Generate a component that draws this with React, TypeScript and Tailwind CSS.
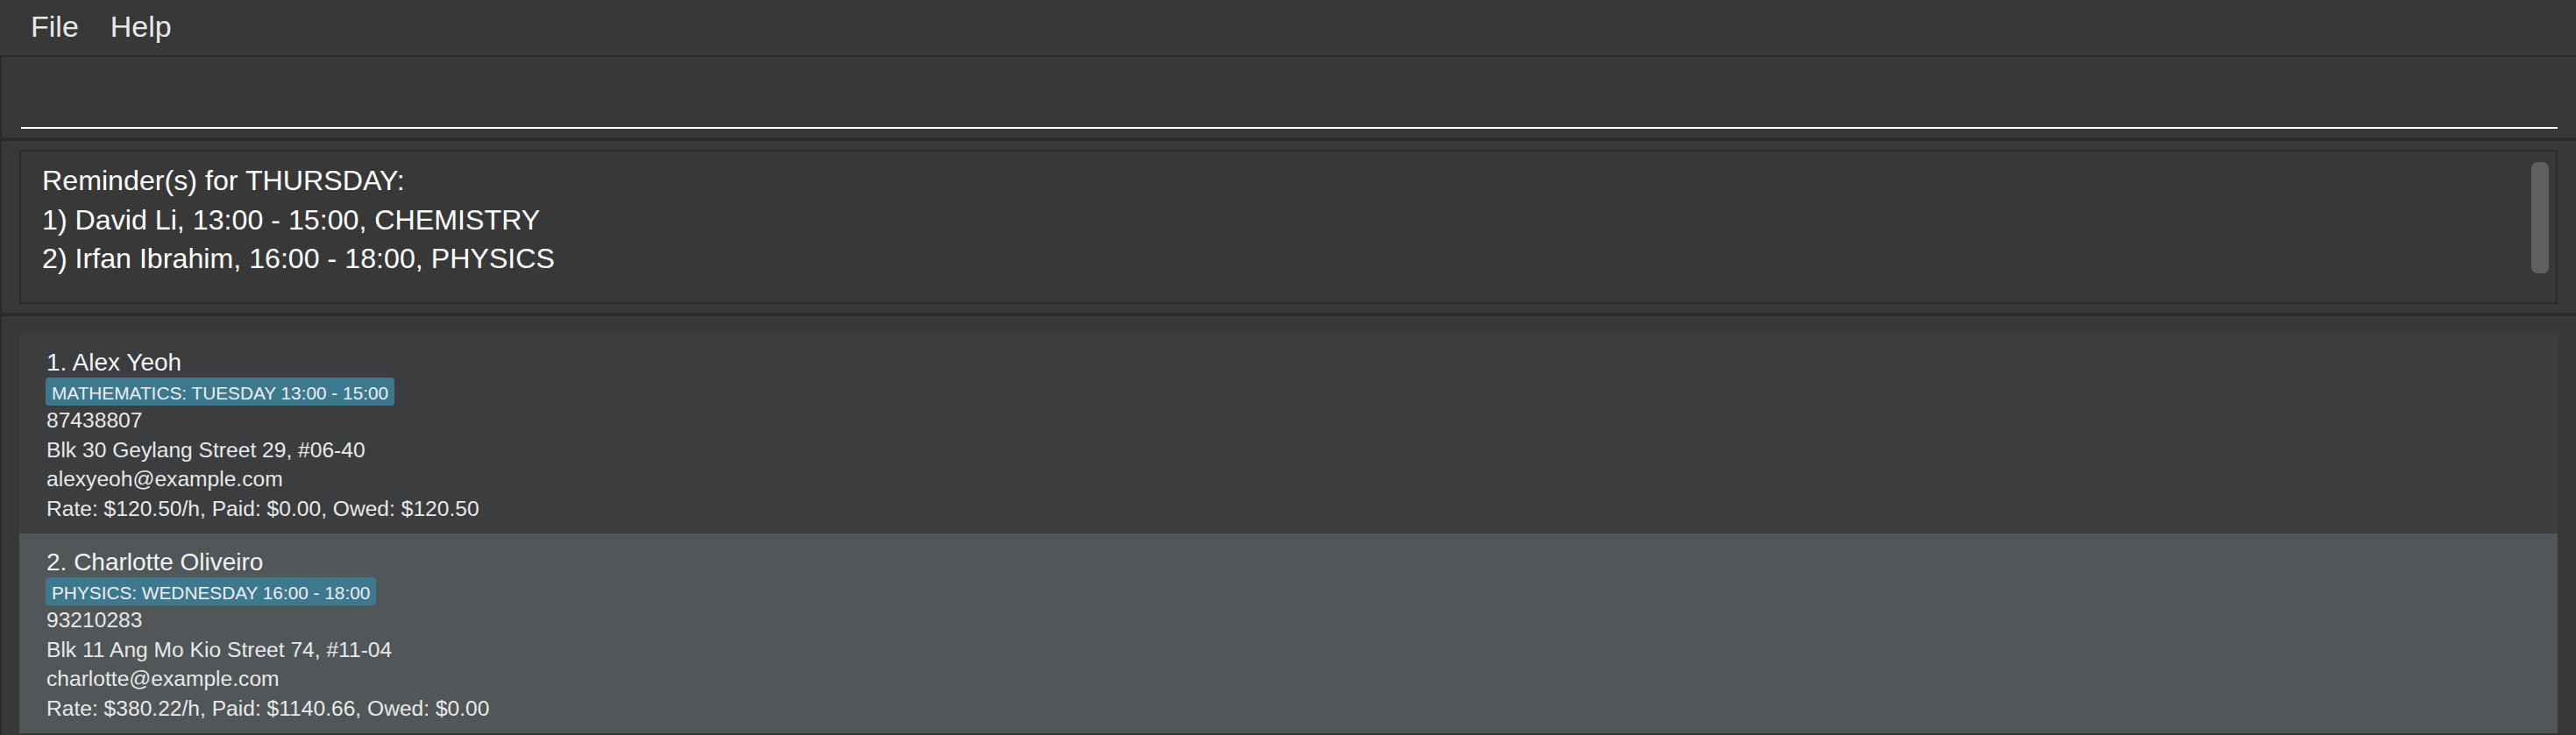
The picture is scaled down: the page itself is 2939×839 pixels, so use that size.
import React from 'react';

const sans = { fontFamily: '"Liberation Sans", Arial, sans-serif' };

const students = [
    {
        name: '1. Alex Yeoh',
        tag: 'MATHEMATICS: TUESDAY 13:00 - 15:00',
        phone: '87438807',
        address: 'Blk 30 Geylang Street 29, #06-40',
        email: 'alexyeoh@example.com',
        fees: 'Rate: $120.50/h, Paid: $0.00, Owed: $120.50',
    },
    {
        name: '2. Charlotte Oliveiro',
        tag: 'PHYSICS: WEDNESDAY 16:00 - 18:00',
        phone: '93210283',
        address: 'Blk 11 Ang Mo Kio Street 74, #11-04',
        email: 'charlotte@example.com',
        fees: 'Rate: $380.22/h, Paid: $1140.66, Owed: $0.00',
    },
];

export default function App() {
    return (
        <div className="w-full h-[839px] bg-[#383838] flex flex-col overflow-hidden" style={sans}>
            {/* Menu bar */}
            <div className="h-[65px] shrink-0 flex items-center gap-[36px] pl-[35px] pb-[2px] border-b-2 border-[#2a2a2a] text-[34px] text-[#e8e8e8]">
                <span>File</span>
                <span>Help</span>
            </div>

            {/* Command box */}
            <div className="h-[92px] shrink-0 flex flex-col justify-end pb-[10px] pl-[22px] pr-[21px] border-l-2 border-[#2a2a2a]">
                <div className="h-[2px] bg-white" />
            </div>

            <div className="h-[4px] shrink-0 bg-[#2a2a2a]" />

            {/* Reminders */}
            <div className="h-[196px] shrink-0 pt-[10px] pb-[10px] pl-[20px] pr-[21px] border-l-2 border-[#2a2a2a]">
                <div className="relative h-full border-2 border-[#2b2b2b] pl-[24px] pt-[11px] text-[32.2px] leading-[44.5px] text-white">
                    <p>Reminder(s) for THURSDAY:</p>
                    <p>1) David Li, 13:00 - 15:00, CHEMISTRY</p>
                    <p>2) Irfan Ibrahim, 16:00 - 18:00, PHYSICS</p>
                    <div className="absolute right-[8px] top-[12px] w-[20px] h-[127px] rounded-[7px] bg-[#606060]" />
                </div>
            </div>

            <div className="h-[4px] shrink-0 bg-[#2a2a2a]" />

            {/* Student list */}
            <div className="flex-1 pt-[20px] pl-[20px] pr-[21px] border-l-2 border-[#2a2a2a]">
                {students.map((s, i) => (
                    <div
                        key={s.name}
                        className={`h-[228px] pl-[31px] pt-[15px] ${i % 2 === 0 ? 'bg-[#3c3d3f]' : 'bg-[#515658]'}`}
                    >
                        <p className="text-[28px] leading-[35px] text-[#f2f2f2]">{s.name}</p>
                        <div className="flex -ml-[1px]">
                            <span className="h-[32px] pt-[3px] px-[7px] rounded-[4px] bg-[#3d798e] text-[20.8px] leading-[29px] text-[#eeeeee]">
                                {s.tag}
                            </span>
                        </div>
                        <div className="text-[24.6px] leading-[33.7px] text-[#e8e8e8]">
                            <p>{s.phone}</p>
                            <p>{s.address}</p>
                            <p>{s.email}</p>
                            <p>{s.fees}</p>
                        </div>
                    </div>
                ))}
            </div>
        </div>
    );
}
